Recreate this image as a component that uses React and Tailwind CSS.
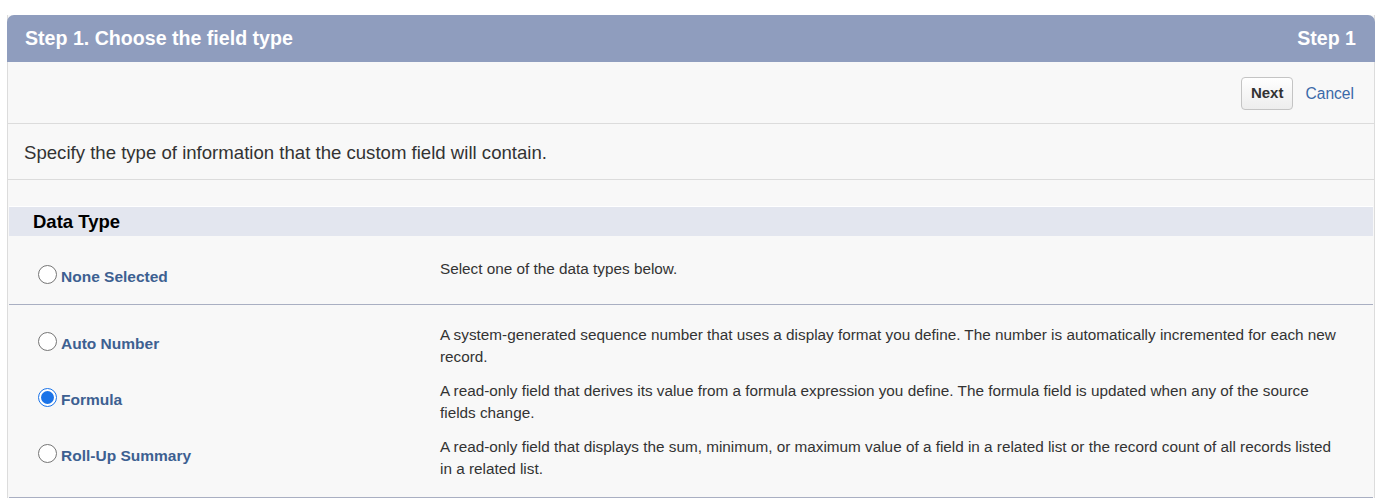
import React, { useState } from "react";

const types = [
  {
    id: "auto",
    label: "Auto Number",
    desc: "A system-generated sequence number that uses a display format you define. The number is automatically incremented for each new record.",
  },
  {
    id: "formula",
    label: "Formula",
    desc: "A read-only field that derives its value from a formula expression you define. The formula field is updated when any of the source fields change.",
  },
  {
    id: "rollup",
    label: "Roll-Up Summary",
    desc: "A read-only field that displays the sum, minimum, or maximum value of a field in a related list or the record count of all records listed in a related list.",
  },
];

const Radio = ({ checked, onClick }) => (
  <span
    onClick={onClick}
    className={
      "inline-flex items-center justify-center w-[19px] h-[19px] rounded-full border bg-white shrink-0 cursor-pointer " +
      (checked ? "border-[#1a73e8]" : "border-[#767676]")
    }
  >
    {checked && <span className="w-[13px] h-[13px] rounded-full bg-[#1a73e8]" />}
  </span>
);

const App = () => {
  const [selected, setSelected] = useState("formula");

  return (
    <div className="min-h-[502px] bg-white pt-[15px] pl-[7px] font-['Liberation_Sans',Arial,sans-serif]">
      <div className="w-[1368px] border-x border-[#dcdcdc] bg-[#f8f8f8]">
        <div className="flex items-center justify-between h-[47px] pl-[18px] pr-[19px] bg-[#8f9dbe] rounded-t-[7px] -mx-px">
          <h1 className="text-[19.6px] font-bold text-white">Step 1. Choose the field type</h1>
          <span className="text-[19.6px] font-bold text-white">Step 1</span>
        </div>

        <div className="flex items-center justify-end gap-[12px] h-[62px] pr-[20px] pt-[2px] border-b border-[#dcdcdc]">
          <button className="h-[33px] px-[9px] rounded-[4px] border border-[#c4c4c4] bg-gradient-to-b from-white to-[#ededed] text-[15px] font-bold text-[#333]">
            Next
          </button>
          <a className="text-[15.6px] text-[#3b6aa8] cursor-pointer">Cancel</a>
        </div>

        <div className="flex items-center h-[56px] px-[16px] pt-[2px] border-b border-[#dcdcdc]">
          <p className="text-[18.6px] text-[#333]">
            Specify the type of information that the custom field will contain.
          </p>
        </div>

        <div className="pt-[26px] mx-px">
          <div className="h-[30px] flex items-center px-[24px] bg-[#e3e6ef] border-t border-white">
            <h2 className="text-[18.5px] font-bold text-black">Data Type</h2>
          </div>

          <div className="flex h-[69px] border-b border-[#a9afc2]">
            <div className="w-[431px] pl-[29px] pt-[24px]">
              <label className="flex items-center gap-[4px]">
                <Radio checked={selected === "none"} onClick={() => setSelected("none")} />
                <span className="text-[15.5px] font-bold text-[#3d6091] mt-[5px]">None Selected</span>
              </label>
            </div>
            <div className="flex-1 pt-[22px] text-[15.3px] leading-[22px] text-[#333]">
              Select one of the data types below.
            </div>
          </div>

          <div className="pt-[13px] pb-[11px] border-b border-[#a9afc2]">
            {types.map((t) => (
              <div key={t.id} className="flex py-[6px]">
                <div className="w-[431px] pl-[29px] flex items-center">
                  <label className="flex items-center gap-[4px] -mt-[10px]">
                    <Radio checked={selected === t.id} onClick={() => setSelected(t.id)} />
                    <span className="text-[15.5px] font-bold text-[#3d6091] mt-[5px]">{t.label}</span>
                  </label>
                </div>
                <div className="flex-1 pr-[26px] text-[15.3px] leading-[22px] text-[#333]">{t.desc}</div>
              </div>
            ))}
          </div>
        </div>
      </div>
    </div>
  );
};

export default App;
